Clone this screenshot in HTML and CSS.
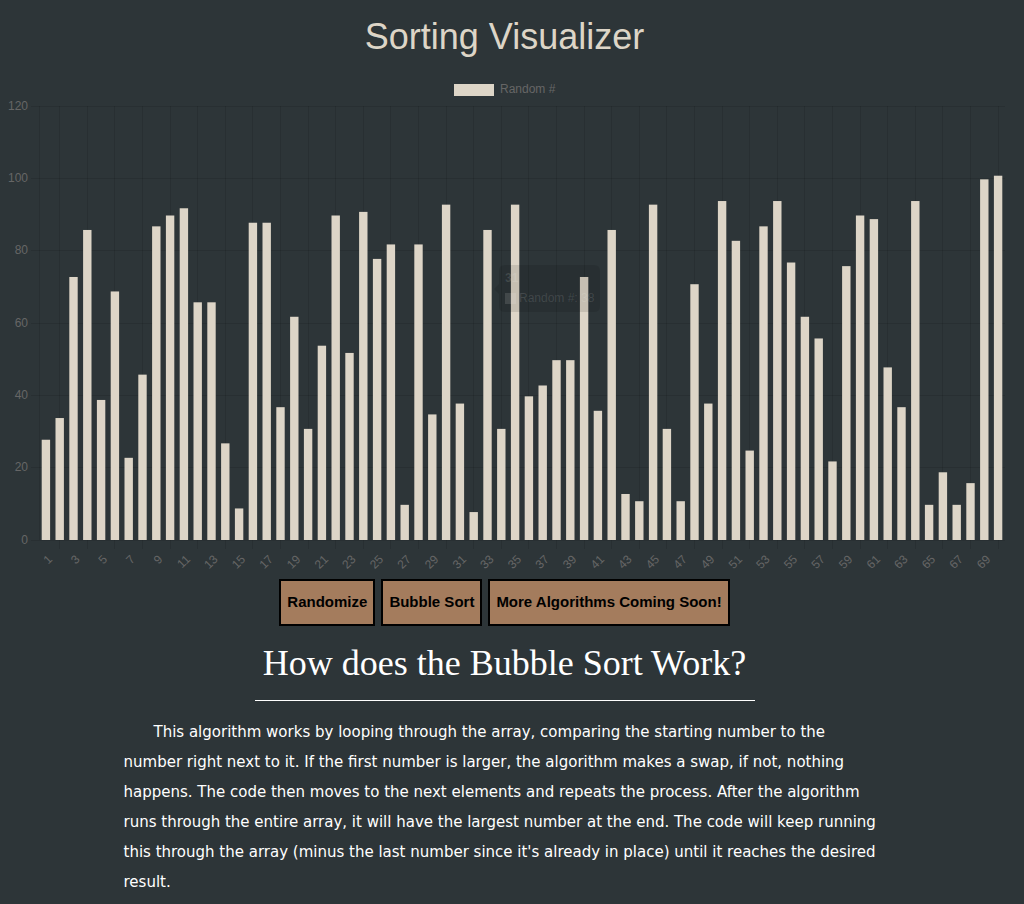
FILE: index.html
```html
<!DOCTYPE html>
<html lang="en">
<head>
<meta charset="utf-8">
<title>Sorting Visualizer</title>
<link rel="stylesheet" href="styles.css">
</head>
<body>
<header>
  <h1 class="title">Sorting Visualizer</h1>
</header>
<main>
  <svg class="chart" id="chart" viewBox="0 0 1009 505" role="img" aria-label="Random numbers"></svg>
  <div class="controls">
    <button class="btn" type="button">Randomize</button>
    <button class="btn" type="button">Bubble Sort</button>
    <button class="btn" type="button">More Algorithms Coming Soon!</button>
  </div>
  <section class="about">
    <h2 class="about-title">How does the Bubble Sort Work?</h2>
    <p class="about-text">This algorithm works by looping through the array, comparing the starting number to the number right next to it. If the first number is larger, the algorithm makes a swap, if not, nothing happens. The code then moves to the next elements and repeats the process. After the algorithm runs through the entire array, it will have the largest number at the end. The code will keep running this through the array (minus the last number since it's already in place) until it reaches the desired result.</p>
  </section>
</main>
<script src="chart.js"></script>
</body>
</html>
```
FILE: styles.css
```css
body {
  margin: 0;
  padding-right: 15px;
  background: #2d3538;
  color: #fff;
  font-family: "Liberation Sans", Arial, sans-serif;
}

.title {
  margin: 0;
  padding: 16px 0;
  color: #ddd5c7;
  font-size: 36px;
  font-weight: 400;
  line-height: 42px;
  text-align: center;
}

.chart {
  display: block;
  width: 100%;
  height: auto;
  font-size: 12px;
}

.grid {
  stroke: #000;
  stroke-opacity: 0.1;
}

.bar {
  fill: #ddd5c7;
}

.label {
  fill: #666;
}

.end {
  text-anchor: end;
}

.tip {
  fill: #000;
  fill-opacity: 0.1;
}

.tip-text {
  fill: #fff;
  fill-opacity: 0.12;
}

.tip-title {
  font-weight: 700;
}

.controls {
  display: flex;
  justify-content: center;
  gap: 6px;
}

.btn {
  box-sizing: border-box;
  height: 47px;
  padding: 0 6px 2px;
  border: 2px solid #000;
  border-radius: 0;
  background: #a47c5d;
  color: #000;
  font: 700 15px "Liberation Sans", Arial, sans-serif;
}

.about-title {
  width: 500px;
  max-width: 100%;
  margin: 17px auto 0;
  padding-bottom: 16px;
  border-bottom: 1px solid #fff;
  font-family: "Liberation Serif", "Times New Roman", serif;
  font-size: 36px;
  font-weight: 400;
  line-height: 41px;
  text-align: center;
}

.about-text {
  max-width: 762px;
  margin: 0 auto;
  padding: 16px 0 6px;
  font-family: Verdana, "DejaVu Sans", sans-serif;
  font-size: 15px;
  line-height: 30px;
  text-indent: 30px;
}
```
FILE: chart.js
```js
const values = [
  28, 34, 73, 86, 39, 69, 23, 46, 87, 90, 92, 66, 66, 27, 9, 88, 88, 37, 62, 31,
  54, 90, 52, 91, 78, 82, 10, 82, 35, 93, 38, 8, 86, 31, 93, 40, 43, 50, 50, 73,
  36, 86, 13, 11, 93, 31, 11, 71, 38, 94, 83, 25, 87, 94, 77, 62, 56, 22, 76, 90,
  89, 48, 37, 94, 10, 19, 10, 16, 100, 101
];
const svg = document.getElementById("chart");
const left = 39, top0 = 32, bottom = 466, right = 1005;
const step = (right - left) / values.length;
const unit = (bottom - top0) / 120;

function add(tag, attrs, text) {
  const el = document.createElementNS("http://www.w3.org/2000/svg", tag);
  for (const key in attrs) el.setAttribute(key, attrs[key]);
  if (text !== undefined) el.textContent = text;
  svg.appendChild(el);
}

function line(x1, y1, x2, y2) {
  add("line", { class: "grid", x1, y1, x2, y2 });
}

add("rect", { class: "bar", x: 454, y: 10, width: 40, height: 12 });
add("text", { class: "label", x: 500, y: 19 }, "Random #");

for (let v = 0; v <= 120; v += 20) {
  const y = Math.floor(bottom - v * unit);
  line(31, y + 0.5, right, y + 0.5);
  add("text", { class: "label end", x: 28, y: y + 4 }, v);
}

line(left + 0.5, top0, left + 0.5, bottom);
values.forEach((v, i) => {
  const cx = left + step * (i + 0.5);
  if (i % 2) {
    const x = Math.floor(cx) + 0.5;
    line(x, top0, x, bottom + 9);
  } else {
    add("text", {
      class: "label end",
      transform: `translate(${cx + 7} 486) rotate(-45)`
    }, i + 1);
  }
});

values.forEach((v, i) => {
  const cx = left + step * (i + 0.5);
  const height = v * unit - 1;
  add("rect", { class: "bar", x: cx - 4.2, y: bottom - height, width: 8.4, height });
});

add("path", { class: "tip", d: "M505 191H594Q600 191 600 197V232Q600 238 594 238H505Q499 238 499 232V220L494 215L499 210V197Q499 191 505 191Z" });
add("text", { class: "tip-text tip-title", x: 505, y: 208 }, "31");
add("rect", { class: "tip-text", x: 505, y: 219, width: 11, height: 11 });
add("text", { class: "tip-text", x: 519, y: 228 }, "Random #: 38");
```
